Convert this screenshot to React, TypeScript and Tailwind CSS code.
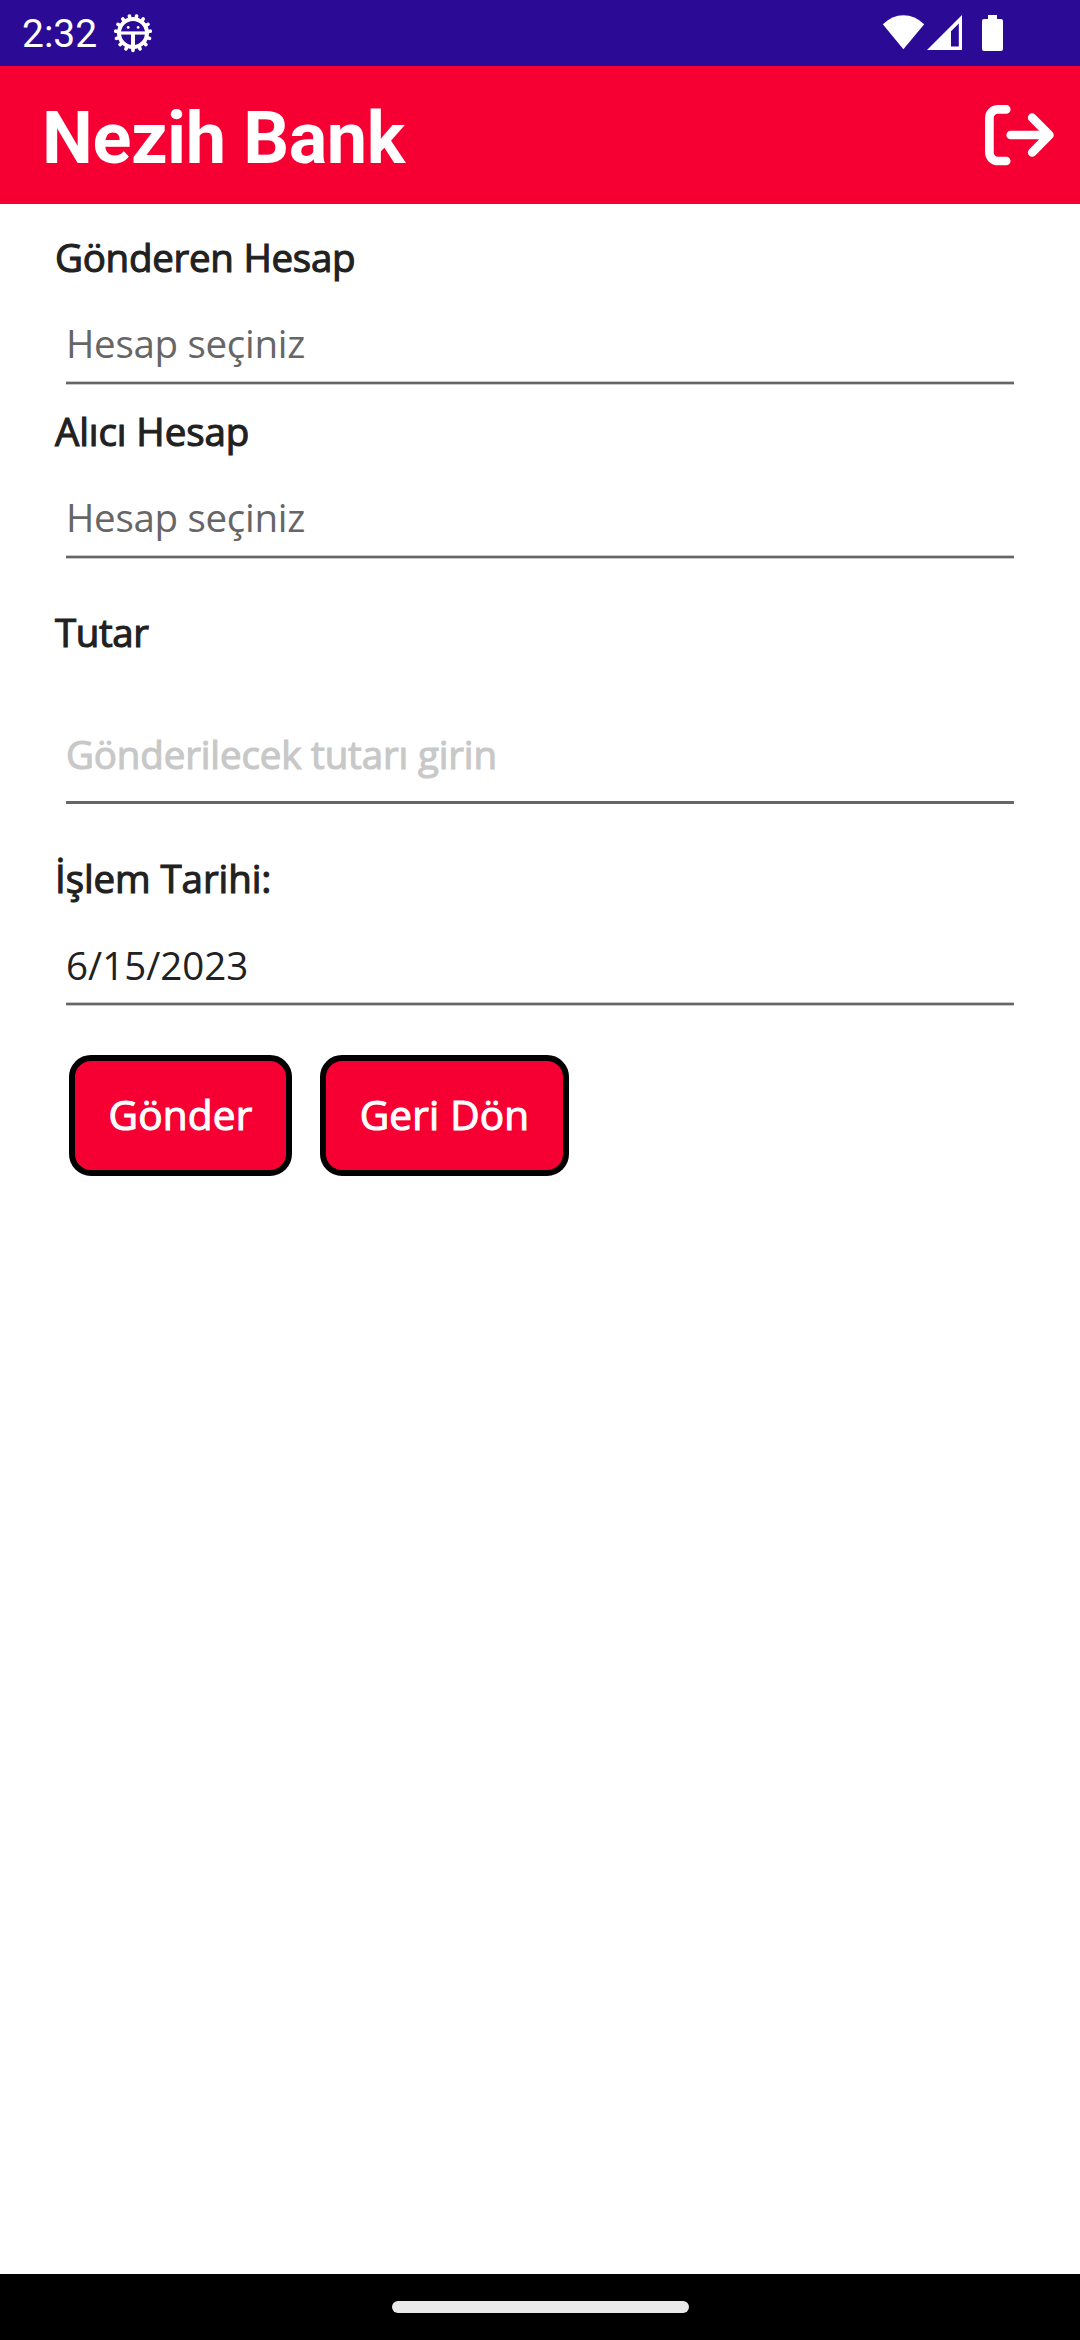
const TEETH = Array.from({ length: 15 }, (_, i) => 90 + i * 24);

function GearIcon() {
  return (
    <svg className="size-10" viewBox="0 0 40 40" fill="none" stroke="#fff">
      <circle cx="20" cy="20" r="14" strokeWidth="4" />
      {TEETH.map((a) => (
        <path key={a} d="M34.5 20H37.4" strokeWidth="3.6" strokeLinecap="round" transform={`rotate(${a} 20 20)`} />
      ))}
      <path d="M7 20H33" strokeWidth="3.2" />
      <path d="M20 20V34" strokeWidth="4" />
      <circle cx="15.2" cy="14.4" r="1.4" fill="#fff" stroke="none" />
      <circle cx="25.1" cy="14.4" r="1.4" fill="#fff" stroke="none" />
    </svg>
  );
}

function StatusBar() {
  return (
    <div className="flex h-[66px] items-center bg-[#2b0a96] pl-[22px]">
      <span className="w-[91px] pt-0.5 font-['Roboto',sans-serif] text-[39px] leading-[66px] text-white">2:32</span>
      <GearIcon />
      <svg className="ml-auto mr-[72px] h-[66px] w-[128px]" viewBox="880 0 128 66" fill="#fff">
        <path d="M882.8 24.3 Q892 15.2 903.4 15.2 Q915 15.2 924.2 24.3 L903.4 49.3 Z" />
        <path fillRule="evenodd" d="M962 15 V50 H927 Z M958.8 23.4 L951 31.2 V46.4 H958.8 Z" />
        <path d="M988 15h9v4h4a2 2 0 0 1 2 2v28a2 2 0 0 1-2 2h-17a2 2 0 0 1-2-2V21a2 2 0 0 1 2-2h4z" />
      </svg>
    </div>
  );
}

function Header() {
  return (
    <header className="flex h-[138px] items-center justify-between bg-[#f60033] pl-[42px] pr-[26px]">
      <h1 className="pt-[8px] font-['Roboto',sans-serif] text-[72px] font-bold leading-[130px] tracking-[-0.4px] text-white">Nezih Bank</h1>
      <svg className="h-[62px] w-[70px]" viewBox="0 0 70 62" fill="none" stroke="#fff" strokeWidth="8.7" strokeLinecap="round">
        <path d="M22.2 5.4H14A8.5 8.5 0 0 0 5.4 14V48.5A8.5 8.5 0 0 0 14 57H22.2" />
        <path d="M26.7 31H63M48.2 13.7L65.4 31L48.2 48.5" strokeLinejoin="round" />
      </svg>
    </header>
  );
}

function Label({ children, className }: { children: string; className: string }) {
  return <div className={`h-[52px] pl-[55px] leading-[50px] text-[#212121] [-webkit-text-stroke:1.1px_#212121] ${className}`}>{children}</div>;
}

function Field({ value, className }: { value: string; className: string }) {
  return (
    <div className="mx-[66px] mt-[33px] h-[68px] border-b border-[#c8c8c8]">
      <div className={`h-16 ${className}`}>{value}</div>
      <div className="h-[3px] border-t border-[#c8c8c8] bg-[#666]" />
    </div>
  );
}

function ActionButton({ children, className }: { children: string; className: string }) {
  return (
    <button className={`h-[121px] shrink-0 rounded-[22px] border-[6px] border-black bg-[#f60033] pb-px text-[40.5px] text-white [-webkit-text-stroke:1.1px_#fff] ${className}`}>
      {children}
    </button>
  );
}

export default function App() {
  return (
    <div className="flex h-[2340px] w-[1080px] flex-col bg-white font-['Open_Sans',sans-serif] text-[38.5px]">
      <StatusBar />
      <Header />
      <main className="flex-1 pt-[28px]">
        <Label className="tracking-[-0.28px]">Gönderen Hesap</Label>
        <Field value="Hesap seçiniz" className="leading-[52px] tracking-[-0.3px] text-[#666]" />
        <div className="h-[21px]" />
        <Label className="tracking-[-0.1px]">Alıcı Hesap</Label>
        <Field value="Hesap seçiniz" className="leading-[52px] tracking-[-0.3px] text-[#666]" />
        <div className="h-[48px]" />
        <Label className="tracking-[-0.4px]">Tutar</Label>
        <div className="mx-[66px] mt-[70px] h-[75px] border-b-[3px] border-[#666] leading-[50px] tracking-[-0.15px] text-[#c8c8c8] [-webkit-text-stroke:1.1px_#c8c8c8]">
          Gönderilecek tutarı girin
        </div>
        <div className="h-[49px]" />
        <Label className="tracking-[-0.1px]">İşlem Tarihi:</Label>
        <Field value="6/15/2023" className="leading-[54px] text-[#212121]" />
        <div className="ml-[69px] mt-[49px] flex gap-[28px]">
          <ActionButton className="w-[223px] tracking-[0.2px]">Gönder</ActionButton>
          <ActionButton className="w-[249px] tracking-[0.2px]">Geri Dön</ActionButton>
        </div>
      </main>
      <footer className="flex h-[66px] justify-center bg-black pt-[27px]">
        <div className="h-[12px] w-[297px] rounded-full bg-[#eaeaea]" />
      </footer>
    </div>
  );
}
